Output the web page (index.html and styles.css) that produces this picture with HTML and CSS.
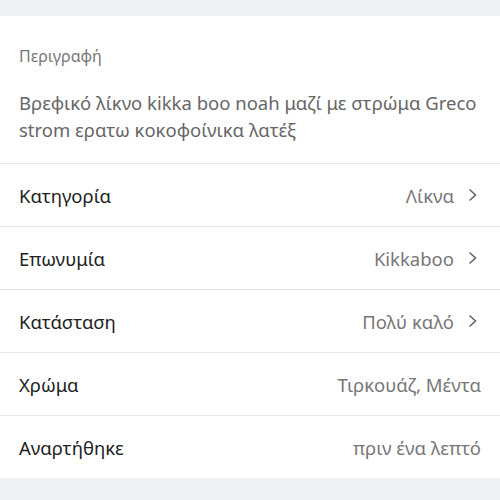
FILE: index.html
```html
<!DOCTYPE html>
<html lang="el">
<head>
    <meta charset="UTF-8">
    <meta name="viewport" content="width=device-width, initial-scale=1.0">
    <title>Αγγελία</title>
    <link rel="stylesheet" href="styles.css">
</head>
<body>
    <div class="card">
        <div class="description">
            <h3>Περιγραφή</h3>
            <p>Βρεφικό λίκνο kikka boo noah μαζί με στρώμα Greco strom ερατω κοκοφοίνικα λατέξ</p>
        </div>
        <div class="row">
            <span class="label">Κατηγορία</span>
            <span class="value">Λίκνα <svg class="chevron" viewBox="0 0 9 14"><path d="M1.5 1.5l6 5.5-6 5.5"/></svg></span>
        </div>
        <div class="row">
            <span class="label">Επωνυμία</span>
            <span class="value">Kikkaboo <svg class="chevron" viewBox="0 0 9 14"><path d="M1.5 1.5l6 5.5-6 5.5"/></svg></span>
        </div>
        <div class="row">
            <span class="label">Κατάσταση</span>
            <span class="value">Πολύ καλό <svg class="chevron" viewBox="0 0 9 14"><path d="M1.5 1.5l6 5.5-6 5.5"/></svg></span>
        </div>
        <div class="row">
            <span class="label">Χρώμα</span>
            <span class="value">Τιρκουάζ, Μέντα</span>
        </div>
        <div class="row">
            <span class="label">Αναρτήθηκε</span>
            <span class="value">πριν ένα λεπτό</span>
        </div>
    </div>
</body>
</html>
```

FILE: styles.css
```css
/* Reset */
body, h3, p {
    margin: 0;
    padding: 0;
}

body {
    background-color: #eef0f1;
    font-family: "Noto Sans", sans-serif;
    padding: 16px 0 23px;
}

.card {
    background: white;
}

.description {
    padding: 29px 19px 0;
    height: 118px;
    border-bottom: 1px solid #e6e6e6;
}

.description h3 {
    font-size: 16px;
    font-weight: normal;
    color: #777;
    line-height: 22px;
}

.description p {
    margin-top: 22px;
    font-size: 18.5px;
    line-height: 27px;
    color: #666;
}

.row {
    display: flex;
    justify-content: space-between;
    align-items: center;
    height: 62px;
    padding: 0 19px;
    border-bottom: 1px solid #e6e6e6;
    font-size: 18.5px;
}

.row:last-child {
    border-bottom: none;
}

.label {
    color: #222;
}

.value {
    display: flex;
    align-items: center;
    color: #777;
}

.chevron {
    width: 9px;
    height: 14px;
    margin-left: 14px;
    margin-right: 4px;
    fill: none;
    stroke: #666;
    stroke-width: 1.6;
}
```
